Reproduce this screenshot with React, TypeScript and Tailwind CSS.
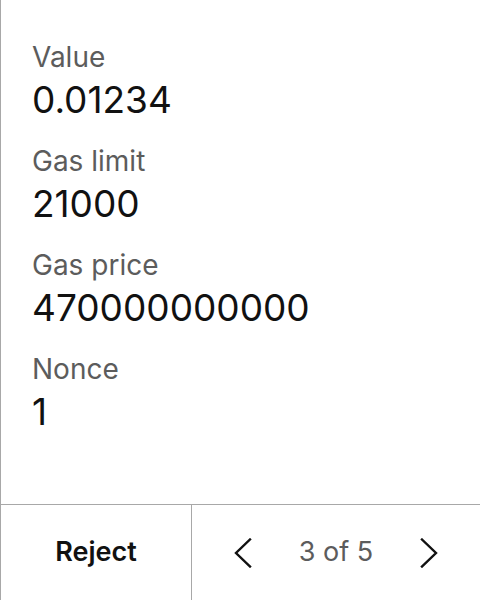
const rows = [
  { label: 'Value', value: '0.01234' },
  { label: 'Gas limit', value: '21000' },
  { label: 'Gas price', value: '470000000000' },
  { label: 'Nonce', value: '1' },
]

function Chevron({ dir }: { dir: 'left' | 'right' }) {
  const points = dir === 'left' ? '16,1.5 2,15 16,28.5' : '2,1.5 16,15 2,28.5'
  return (
    <svg width="18" height="30" viewBox="0 0 18 30" fill="none">
      <polyline points={points} stroke="#111" strokeWidth="2.4" strokeLinecap="square" strokeLinejoin="miter" />
    </svg>
  )
}

export default function App() {
  return (
    <div
      className="h-[600px] w-[480px] flex flex-col bg-white border-l border-[#a8a8a8]"
      style={{ fontFamily: 'Inter, "Noto Sans", sans-serif' }}
    >
      <div className="flex-1 pl-[31px] pt-[39px] flex flex-col gap-[18px]">
        {rows.map((row) => (
          <div key={row.label} className="flex flex-col">
            <div className="text-[28px] leading-[36px] text-[#5c5c5c]">{row.label}</div>
            <div className="text-[37px] leading-[50px] text-[#111]">{row.value}</div>
          </div>
        ))}
      </div>
      <div className="h-[96px] flex border-t border-[#a8a8a8]">
        <div className="w-[191px] border-r border-[#a8a8a8] flex items-center justify-center">
          <span className="text-[27px] font-semibold text-[#111]">Reject</span>
        </div>
        <div className="flex-1 flex items-center justify-between px-[42px]">
          <Chevron dir="left" />
          <span className="text-[27px] text-[#5c5c5c]">3 of 5</span>
          <Chevron dir="right" />
        </div>
      </div>
    </div>
  )
}
